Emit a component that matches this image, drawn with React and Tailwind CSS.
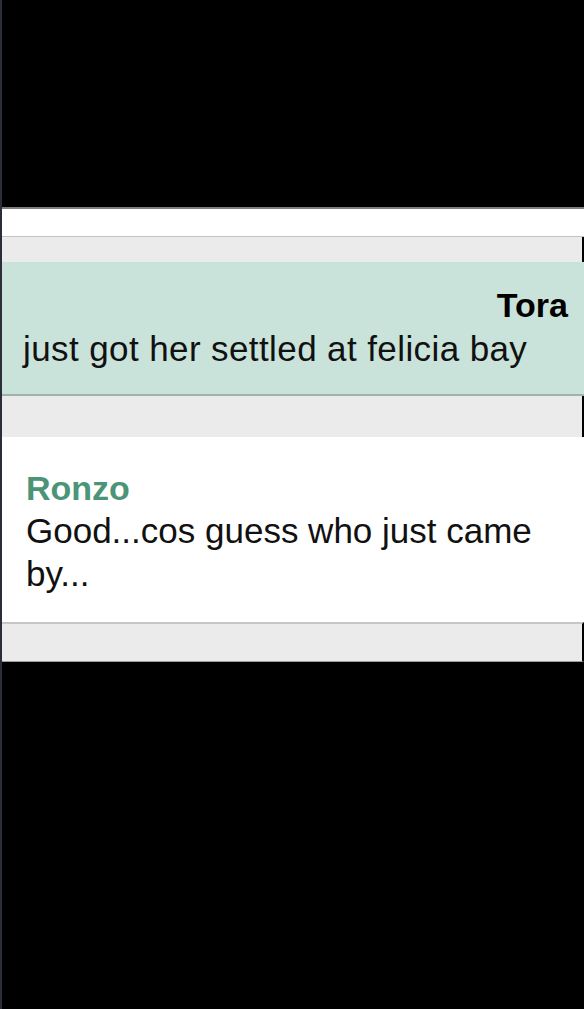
export default function App() {
  return (
    <div className="w-[584px] h-[1009px] bg-black flex flex-col border-l-2 border-[#2a2e3a]" style={{ fontFamily: '"Liberation Sans", Arial, sans-serif' }}>
      <div className="h-[207px] shrink-0" />
      <div className="h-[30px] shrink-0 bg-white border-t-2 border-[#7d7d7d] border-b border-b-[#c4c4c4]" />
      <div className="h-[25px] shrink-0 bg-[#ebebeb] border-r-2 border-black" />
      <div className="h-[134px] shrink-0 bg-[#c9e3da] border-b-2 border-[#9db3ab] pt-[22px] pl-[21px] pr-[15px] text-black">
        <div className="text-right font-bold text-[34px] leading-[42px] pr-[1px]">Tora</div>
        <div className="text-[35px] leading-[46px] tracking-[0.4px] text-[#111]">just got her settled at felicia bay</div>
      </div>
      <div className="h-[41px] shrink-0 bg-[#ebebeb] border-r-2 border-black" />
      <div className="h-[185px] shrink-0 bg-white pt-[30px] pl-[24px] pr-[40px]">
        <div className="font-bold text-[34px] leading-[42px] text-[#4b9478]">Ronzo</div>
        <div className="text-[35px] leading-[43px] text-[#111]">Good...cos guess who just came by...</div>
      </div>
      <div className="h-[40px] shrink-0 bg-[#ebebeb] border-t-2 border-[#c6c6c6] border-r-2 border-r-black border-b border-b-[#9a9a9a]" />
      <div className="flex-1" />
    </div>
  );
}
